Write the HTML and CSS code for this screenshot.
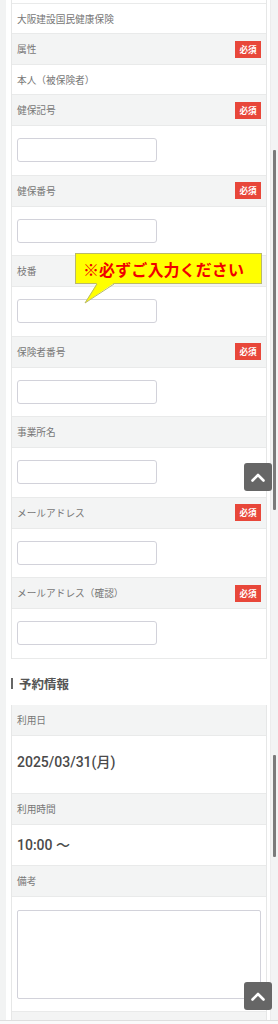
FILE: index.html
```html
<!DOCTYPE html>
<html lang="ja">
<head>
<meta charset="utf-8">
<title>予約フォーム</title>
<link rel="stylesheet" href="styles.css">
</head>
<body>
<div class="shell">
  <div class="gutter-l"></div>
  <main class="main">
    <div class="table">
      <div class="row cut"></div>
      <div class="row text"><span class="label">大阪建設国民健康保険</span></div>
      <div class="row head"><span class="label">属性</span><span class="badge">必須</span></div>
      <div class="row text"><span class="label">本人（被保険者）</span></div>
      <div class="row head"><span class="label">健保記号</span><span class="badge">必須</span></div>
      <div class="row field"><input class="input" type="text"></div>
      <div class="row head"><span class="label">健保番号</span><span class="badge">必須</span></div>
      <div class="row field"><input class="input" type="text"></div>
      <div class="row head tip-host"><span class="label">枝番</span>
        <div class="tooltip">
          <span class="tip-text">※必ずご入力ください</span>
          <svg class="tip-tail" width="40" height="24" viewBox="0 0 40 24"><polygon points="22,0 39,0 10,20" fill="#ffff00"/><polyline points="22,1 10,20 39,1" fill="none" stroke="#b9b96a" stroke-width="1"/></svg>
        </div>
      </div>
      <div class="row field"><input class="input" type="text"></div>
      <div class="row head"><span class="label">保険者番号</span><span class="badge">必須</span></div>
      <div class="row field"><input class="input" type="text"></div>
      <div class="row head"><span class="label">事業所名</span></div>
      <div class="row field"><input class="input" type="text"></div>
      <div class="row head"><span class="label">メールアドレス</span><span class="badge">必須</span></div>
      <div class="row field"><input class="input" type="text"></div>
      <div class="row head"><span class="label">メールアドレス（確認）</span><span class="badge">必須</span></div>
      <div class="row field"><input class="input" type="text"></div>
    </div>

    <h2 class="section-title"><span class="bar"></span>予約情報</h2>

    <div class="table">
      <div class="row head"><span class="label">利用日</span></div>
      <div class="row value date"><span class="val">2025/03/31(月)</span></div>
      <div class="row head"><span class="label">利用時間</span></div>
      <div class="row value time"><span class="val">10:00 〜</span></div>
      <div class="row head"><span class="label">備考</span></div>
      <div class="row area"><textarea class="textarea"></textarea></div>
      <div class="row head"><span class="label">&nbsp;</span></div>
    </div>
  </main>
  <div class="gutter-r">
    <span class="thumb thumb-1"></span>
    <span class="thumb thumb-2"></span>
  </div>

  <a class="to-top to-top-1" href="#" aria-label="ページトップへ"><svg width="14" height="9" viewBox="0 0 14 9"><polyline points="1.5,7.5 7,2 12.5,7.5" fill="none" stroke="#fff" stroke-width="2.6" stroke-linecap="round" stroke-linejoin="round"/></svg></a>
  <a class="to-top to-top-2" href="#" aria-label="ページトップへ"><svg width="14" height="9" viewBox="0 0 14 9"><polyline points="1.5,7.5 7,2 12.5,7.5" fill="none" stroke="#fff" stroke-width="2.6" stroke-linecap="round" stroke-linejoin="round"/></svg></a>
  <div class="bottom-bar"></div>
</div>
</body>
</html>
```

FILE: styles.css
```css
html, body {
  margin: 0;
  padding: 0;
}
body {
  background: #f3f4f4;
  font-family: "Noto Sans CJK JP", "Noto Sans", sans-serif;
  color: #777;
}
.shell {
  position: relative;
  display: flex;
  width: 278px;
  height: 1024px;
  overflow: hidden;
}
.gutter-l {
  width: 6px;
  flex: none;
  background: #f2f3f3;
}
.main {
  width: 264px;
  flex: none;
  box-sizing: border-box;
  padding: 0 3px 0 5px;
  background: #fff;
}
.gutter-r {
  position: relative;
  width: 8px;
  flex: none;
  background: #f3f4f4;
  border-left: 1px solid #ececec;
  box-sizing: border-box;
}
.table {
  border-left: 1px solid #e6e7e7;
  border-right: 1px solid #e6e7e7;
}
.row {
  border-bottom: 1px solid #e9eaea;
  box-sizing: border-box;
}
.row.cut {
  height: 4px;
}
.row.text,
.row.head {
  display: flex;
  align-items: center;
  justify-content: space-between;
  padding: 0 5px 0 5px;
}
.row.text {
  height: 30px;
}
.row.head {
  height: 31px;
  background: #f3f4f4;
}
.label {
  font-size: 9.7px;
  line-height: 12px;
  color: #777;
  white-space: nowrap;
}
.badge {
  width: 26px;
  height: 17px;
  background: #e8473a;
  color: #fff;
  font-size: 8.6px;
  font-weight: 700;
  line-height: 17px;
  text-align: center;
}
.row.field {
  height: 49.5px;
  padding: 12px 0 0 5px;
}
.input {
  display: block;
  width: 140px;
  height: 24px;
  box-sizing: border-box;
  margin: 0;
  border: 1px solid #d2d2da;
  border-radius: 3px;
  background: #fff;
  padding: 0 6px;
}
.tip-host {
  position: relative;
}
.tooltip {
  position: absolute;
  left: 63px;
  top: -3px;
  width: 187px;
  height: 31px;
  box-sizing: border-box;
  background: #ffff00;
  border: 1px solid #b9b96a;
  display: flex;
  align-items: center;
  padding-left: 7px;
  z-index: 2;
}
.tip-text {
  font-size: 16px;
  font-weight: 700;
  line-height: 20px;
  color: #f00000;
  white-space: nowrap;
  letter-spacing: 0.1px;
}
.tip-tail {
  position: absolute;
  left: -1px;
  top: 29px;
}
.section-title {
  margin: 0;
  padding: 17px 0 13px 0;
  display: flex;
  align-items: center;
  font-size: 12.5px;
  line-height: 16px;
  font-weight: 700;
  color: #555;
}
.bar {
  width: 2px;
  height: 11px;
  background: #666;
  margin-right: 6px;
}
.row.value {
  padding-left: 5px;
}
.row.date {
  height: 58px;
  padding-top: 12px;
}
.row.time {
  height: 41px;
  display: flex;
  align-items: center;
}
.val {
  font-family: Roboto, "Noto Sans CJK JP", sans-serif;
  font-size: 14px;
  line-height: 18px;
  font-weight: 500;
  color: #4a4a4a;
}
.row.area {
  height: 115px;
  padding: 13px 5px 0 5px;
}
.textarea {
  display: block;
  width: 244px;
  height: 89px;
  box-sizing: border-box;
  margin: 0;
  border: 1px solid #d2d2da;
  border-radius: 2px;
  resize: none;
}
.thumb {
  position: absolute;
  left: 2px;
  width: 2.5px;
  border-radius: 1px;
  background: #7b7b7b;
}
.thumb-1 {
  top: 150px;
  height: 360px;
}
.thumb-2 {
  top: 755px;
  height: 102px;
}
.to-top {
  position: absolute;
  left: 244px;
  width: 28px;
  height: 28px;
  border-radius: 3px;
  background: #666;
  display: flex;
  align-items: center;
  justify-content: center;
  z-index: 3;
}
.to-top-1 {
  top: 463px;
}
.to-top-2 {
  top: 982px;
}
.bottom-bar {
  position: absolute;
  left: 0;
  right: 0;
  bottom: 0;
  height: 3px;
  background: #fafafa;
  border-top: 1px solid #dedede;
}
```
